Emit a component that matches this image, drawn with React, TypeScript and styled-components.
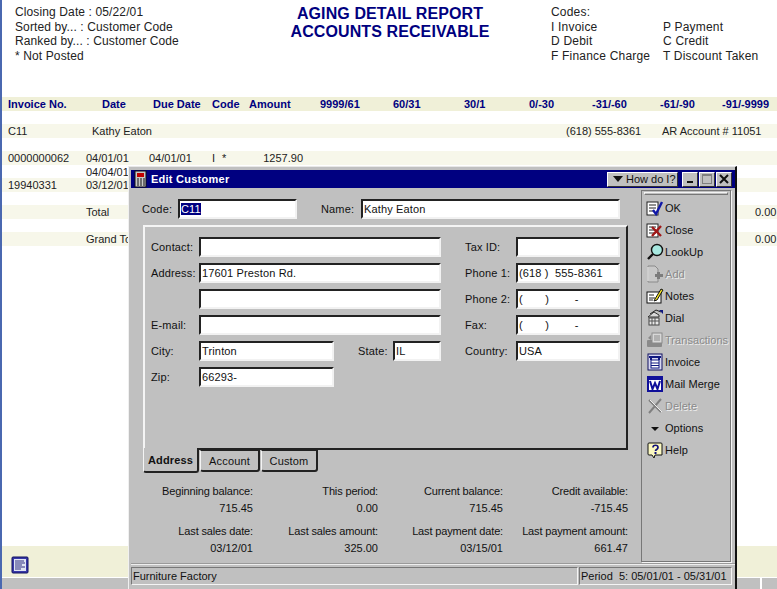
import styled, { createGlobalStyle } from "styled-components";
import { ReactNode } from "react";

const GlobalStyle = createGlobalStyle`
  html, body {
    margin: 0;
    padding: 0;
    background: white;
    overflow: hidden;
  }
  * {
    box-sizing: border-box;
  }
`;

const BAND_DARK = "#f0f0d8";
const BAND_LIGHT = "#f7f7ea";
const NAVY = "#000080";
const GRAY = "#c0c0c0";

const Page = styled.div`
  position: relative;
  width: 777px;
  height: 589px;
  overflow: hidden;
  display: flex;
  flex-direction: column;
  border-left: 2px solid #4a68b0;
  font-family: "Liberation Sans", Arial, sans-serif;
  font-size: 11px;
  color: #222;
`;

const ReportHeader = styled.div`
  height: 97px;
  padding: 5px 0 0 13px;
  display: flex;
`;

const InfoBlock = styled.div`
  width: 220px;
  font-size: 12px;
  line-height: 14.5px;
  letter-spacing: 0.12px;
`;

const Title = styled.div`
  width: 316px;
  padding-right: 6px;
  text-align: center;
  font-size: 16px;
  font-weight: bold;
  line-height: 18px;
  letter-spacing: 0.1px;
  color: ${NAVY};
`;

const Codes = styled.div`
  width: 226px;
  font-size: 12px;
  line-height: 14.5px;
  letter-spacing: 0.2px;
  display: grid;
  grid-template-columns: 112px 1fr;
  align-content: start;
`;

const Band = styled.div<{ $fill?: string }>`
  height: 13.5px;
  line-height: 14px;
  padding-left: 6px;
  display: flex;
  white-space: nowrap;
  background: ${(p) => p.$fill || "transparent"};
`;

const Cell = styled.span<{ $w: number; $right?: boolean }>`
  flex: none;
  width: ${(p) => p.$w}px;
  text-align: ${(p) => (p.$right ? "right" : "left")};
`;

const HeaderBand = styled(Band)`
  font-weight: bold;
  color: ${NAVY};
`;

const Spacer = styled.div`
  flex: 1;
`;

const FooterBand = styled.div`
  height: 31px;
  margin-left: -2px;
  padding: 10px 0 0 11px;
  background: ${BAND_DARK};
`;

const ScrollTrack = styled.div`
  height: 12px;
  margin-left: -2px;
  background: ${GRAY};
  border-top: 1px solid white;
  display: flex;
  justify-content: flex-end;
`;

const ScrollEnd = styled.div`
  width: 17px;
  border-left: 2px solid white;
`;

const Window = styled.div`
  position: absolute;
  left: 126px;
  top: 166px;
  width: 609px;
  height: 426px;
  display: flex;
  flex-direction: column;
  background: ${GRAY};
  border-top: 1px solid #e8e8e8;
  border-left: 1px solid #f0f0f0;
  border-right: 2px solid #111;
  padding: 3px 0 0 2px;
  color: #111;
`;

const TitleBar = styled.div`
  height: 18px;
  flex: none;
  background: ${NAVY};
  color: white;
  display: flex;
  align-items: center;
  padding: 0 3px 0 2px;
`;

const TitleText = styled.div`
  font-size: 11px;
  font-weight: bold;
  letter-spacing: 0.25px;
  margin-left: 2px;
  flex: 1;
`;

const raised = `
  background: ${GRAY};
  border-top: 1px solid #fff;
  border-left: 1px solid #fff;
  border-right: 1px solid #333;
  border-bottom: 1px solid #333;
`;

const HowDoI = styled.div`
  ${raised}
  width: 71px;
  height: 15px;
  margin-right: 3px;
  display: flex;
  align-items: center;
  gap: 3px;
  padding-left: 5px;
  color: #111;
  white-space: nowrap;
`;

const CaptionButton = styled.div`
  ${raised}
  width: 16px;
  height: 15px;
  margin-left: 1px;
  display: flex;
  align-items: center;
  justify-content: center;
`;

const MainArea = styled.div`
  flex: 1;
  display: flex;
  min-height: 0;
`;

const LeftPane = styled.div`
  width: 509px;
  padding: 11px 0 0 11px;
`;

const TopRow = styled.div`
  height: 20px;
  display: flex;
  align-items: center;
`;

const Label = styled.span<{ $w: number; $pad?: number }>`
  flex: none;
  width: ${(p) => p.$w}px;
  padding-left: ${(p) => p.$pad || 0}px;
  letter-spacing: 0.15px;
`;

const Field = styled.div<{ $w: number }>`
  flex: none;
  width: ${(p) => p.$w}px;
  height: 20px;
  background: white;
  border-top: 2px solid #222;
  border-left: 2px solid #222;
  border-right: 2px solid #f2f2f2;
  border-bottom: 2px solid #f2f2f2;
  line-height: 16px;
  padding-left: 1px;
  white-space: pre;
  letter-spacing: 0.15px;
  color: #111;
`;

const Selected = styled.span`
  background: ${NAVY};
  color: white;
`;

const Panel = styled.div`
  margin: 6px 0 0 1px;
  width: 485px;
  height: 225px;
  padding: 10px 0 0 6px;
  border-top: 2px solid #f4f4f4;
  border-left: 2px solid #f4f4f4;
  border-right: 2px solid #222;
  border-bottom: 2px solid #222;
  display: flex;
`;

const FormColumn = styled.div<{ $w: number }>`
  width: ${(p) => p.$w}px;
  display: flex;
  flex-direction: column;
  gap: 6px;
`;

const FormRow = styled.div`
  height: 20px;
  display: flex;
  align-items: center;
`;

const Tabs = styled.div`
  display: flex;
  align-items: flex-start;
  margin: -2px 0 0 1px;
  height: 25px;
`;

const Tab = styled.div<{ $active?: boolean; $w: number }>`
  position: relative;
  width: ${(p) => p.$w}px;
  height: ${(p) => (p.$active ? 25 : 22)}px;
  margin-top: ${(p) => (p.$active ? 0 : 2)}px;
  margin-right: 1px;
  padding-top: 1px;
  background: ${GRAY};
  border-left: 1px solid #f4f4f4;
  border-right: 2px solid #222;
  border-bottom: 2px solid #222;
  border-top: ${(p) => (p.$active ? "none" : "1px solid #222")};
  border-bottom-left-radius: 3px;
  border-bottom-right-radius: 3px;
  display: flex;
  align-items: center;
  justify-content: center;
  font-weight: ${(p) => (p.$active ? "bold" : "normal")};
  letter-spacing: 0.15px;
`;

const Summary = styled.div`
  margin: 10px 0 0 -14px;
  display: grid;
  grid-template-columns: repeat(4, 125px);
  width: 500px;
  row-gap: 7px;
`;

const SummaryItem = styled.div`
  text-align: right;
  line-height: 16.5px;
  letter-spacing: -0.15px;
`;

const SummaryValue = styled.div`
  letter-spacing: 0;
`;

const SideBar = styled.div`
  width: 90px;
  margin: 2px 0 0 1px;
  border: 1px solid #777;
  box-shadow: 1px 1px 0 #f4f4f4;
  padding: 1px 2px 0;
`;

const Grip = styled.div`
  height: 3px;
  margin-bottom: 2px;
  border-top: 1px solid #f4f4f4;
  border-left: 1px solid #f4f4f4;
  border-right: 1px solid #777;
  border-bottom: 1px solid #777;
`;

const ToolItem = styled.div<{ $disabled?: boolean }>`
  height: 22px;
  display: flex;
  align-items: center;
  padding-left: 2px;
  letter-spacing: 0.05px;
  white-space: nowrap;
  color: ${(p) => (p.$disabled ? "#8a8a8a" : "#111")};
  text-shadow: ${(p) => (p.$disabled ? "1px 1px 0 #eee" : "none")};
`;

const ToolGlyph = styled.span`
  flex: none;
  width: 19px;
  height: 18px;
  display: flex;
  align-items: center;
`;

const StatusBar = styled.div`
  flex: none;
  height: 24px;
  margin-top: 1px;
  padding: 2px 1px 0 0;
  border-top: 2px groove #eee;
  display: flex;
  gap: 1px;
`;

const StatusCell = styled.div<{ $w: number }>`
  width: ${(p) => p.$w}px;
  height: 18px;
  border-top: 1px solid #777;
  border-left: 1px solid #777;
  border-right: 1px solid #f4f4f4;
  border-bottom: 1px solid #f4f4f4;
  line-height: 16px;
  padding-left: 1px;
  white-space: pre;
`;

const WindowBottom = styled.div`
  height: 5px;
  flex: none;
`;

const Svg = ({ children, w = 18, h = 18 }: { children: ReactNode; w?: number; h?: number }) => (
  <svg width={w} height={h} viewBox={`0 0 ${w} ${h}`}>
    {children}
  </svg>
);

const CalcIcon = () => (
  <Svg w={16} h={18}>
    <rect x="2" y="1" width="11" height="16" fill="#c8c8c8" stroke="#111" />
    <rect x="4" y="3" width="7" height="4" fill="#c00000" />
    <path
      d="M4 9h2M7 9h2M10 9h2M4 11h2M7 11h2M10 11h2M4 13h2M7 13h2M10 13h2M4 15h2M7 15h2M10 15h2"
      stroke="#111"
      strokeWidth="1.2"
    />
  </Svg>
);

const OkIcon = () => (
  <Svg>
    <rect x="1" y="3" width="11" height="13" fill="white" stroke="#222" />
    <path d="M3 6h7M3 9h7M3 12h5" stroke="#222" />
    <path d="M7 11l3 4 6-12" fill="none" stroke="#1018a8" strokeWidth="2.4" />
  </Svg>
);

const CloseIcon = () => (
  <Svg>
    <rect x="1" y="3" width="11" height="13" fill="white" stroke="#222" />
    <path d="M3 6h7M3 9h7M3 12h7" stroke="#222" />
    <path d="M6 6l9 9M15 5l-9 10" stroke="#a01818" strokeWidth="2.4" />
  </Svg>
);

const LookUpIcon = () => (
  <Svg>
    <circle cx="11" cy="7" r="5.5" fill="#a8e8e0" stroke="#111" strokeWidth="1.4" />
    <path d="M7 11l-5 5" stroke="#111" strokeWidth="2.4" />
  </Svg>
);

const AddIcon = () => (
  <Svg>
    <path d="M2 1h7l3 3v13H2z" fill="#c8c8c8" stroke="#8a8a8a" />
    <path d="M2 2v14" stroke="#f4f4f4" />
    <path d="M9 9h2V7h3v2h3v3h-3v2h-3v-2H9z" fill="#7c7c7c" />
  </Svg>
);

const NotesIcon = () => (
  <Svg>
    <rect x="1" y="5" width="14" height="11" fill="white" stroke="#111" />
    <path d="M3 8h5M3 11h6M3 13h4" stroke="#222" />
    <path d="M9 12l6-10 2 1-6 10-3 1z" fill="#f0e020" stroke="#111" />
  </Svg>
);

const DialIcon = () => (
  <Svg>
    <path d="M2 8l6-5 5 3v2H2z" fill="#d8d8d8" stroke="#333" />
    <path d="M4 5l6-4 5 2" fill="none" stroke="#222" />
    <path d="M13 1l4 0 0 4z" fill="#101880" />
    <rect x="3" y="9" width="10" height="7" fill="#e8e8e8" stroke="#444" />
    <path d="M3 12h10M6 9v7M9 9v7" stroke="#555" />
  </Svg>
);

const TransactionsIcon = () => (
  <Svg>
    <rect x="1" y="9" width="15" height="7" rx="1" fill="#8a8a8a" />
    <rect x="6" y="2" width="10" height="10" fill="#d8d8d8" stroke="#8a8a8a" />
    <path d="M8 5h6M8 7h6M8 9h6" stroke="#8a8a8a" />
    <path d="M2 7l3-3v5z" fill="#8a8a8a" />
  </Svg>
);

const InvoiceIcon = () => (
  <Svg>
    <rect x="2" y="1" width="14" height="16" fill="#d8d8f0" stroke="#101060" />
    <rect x="3" y="3" width="12" height="2" fill="#101880" />
    <rect x="5" y="7" width="8" height="8" fill="white" stroke="#101880" />
    <path d="M5 10h8M5 12.500h8" stroke="#101880" />
    <rect x="4" y="5" width="2" height="2" fill="#101880" />
    <rect x="12" y="5" width="2" height="2" fill="#101880" />
  </Svg>
);

const MailMergeIcon = () => (
  <Svg>
    <rect x="1" y="1" width="16" height="16" fill="#10109a" />
    <rect x="3" y="5" width="12" height="10" fill="white" />
    <path d="M4 6l2.500 8 2.500-6 2.500 6 2.500-8" fill="none" stroke="#10109a" strokeWidth="2" />
  </Svg>
);

const DeleteIcon = () => (
  <Svg>
    <path d="M3 3l12 12M15 2L3 16" stroke="#808080" strokeWidth="2" />
    <path d="M4 3l12 12" stroke="#eee" />
  </Svg>
);

const OptionsIcon = () => (
  <Svg>
    <path d="M5 8h8l-4 4z" fill="#111" />
  </Svg>
);

const HelpIcon = () => (
  <Svg>
    <path d="M3 2h12a1 1 0 0 1 1 1v11H9l-1 3-2-3H3a1 1 0 0 1-1-1V3a1 1 0 0 1 1-1z" fill="#fbf8c0" stroke="#111" />
    <path d="M7 6.500c0-3 5-3 5 0 0 2-2.500 2-2.500 3.500" fill="none" stroke="#10107a" strokeWidth="1.700" />
    <rect x="8.500" y="11" width="2" height="2" fill="#10107a" />
  </Svg>
);

const ReportIcon = () => (
  <Svg>
    <rect x="1" y="1" width="16" height="16" rx="1" fill="#3838a8" stroke="#101060" />
    <rect x="3" y="3" width="12" height="12" fill="#e0e4f4" />
    <path d="M4 5h9M4 7h10M4 9h7M4 11h10M4 13h6" stroke="#303080" />
  </Svg>
);

const tools: { label: string; icon: ReactNode; disabled?: boolean }[] = [
  { label: "OK", icon: <OkIcon /> },
  { label: "Close", icon: <CloseIcon /> },
  { label: "LookUp", icon: <LookUpIcon /> },
  { label: "Add", icon: <AddIcon />, disabled: true },
  { label: "Notes", icon: <NotesIcon /> },
  { label: "Dial", icon: <DialIcon /> },
  { label: "Transactions", icon: <TransactionsIcon />, disabled: true },
  { label: "Invoice", icon: <InvoiceIcon /> },
  { label: "Mail Merge", icon: <MailMergeIcon /> },
  { label: "Delete", icon: <DeleteIcon />, disabled: true },
  { label: "Options", icon: <OptionsIcon /> },
  { label: "Help", icon: <HelpIcon /> },
];

const summary: [string, string][] = [
  ["Beginning balance:", "715.45"],
  ["This period:", "0.00"],
  ["Current balance:", "715.45"],
  ["Credit available:", "-715.45"],
  ["Last sales date:", "03/12/01"],
  ["Last sales amount:", "325.00"],
  ["Last payment date:", "03/15/01"],
  ["Last payment amount:", "661.47"],
];

const agingHeads: [string, number][] = [
  ["Invoice No.", 94],
  ["Date", 51],
  ["Due Date", 59],
  ["Code", 37],
  ["Amount", 71],
  ["9999/61", 73],
  ["60/31", 71],
  ["30/1", 65],
  ["0/-30", 63],
  ["-31/-60", 68],
  ["-61/-90", 62],
  ["-91/-9999", 60],
];

const App = () => {
  return (
    <Page>
      <GlobalStyle />
      <ReportHeader>
        <InfoBlock>
          <div>Closing Date : 05/22/01</div>
          <div>Sorted by... : Customer Code</div>
          <div>Ranked by... : Customer Code</div>
          <div>* Not Posted</div>
        </InfoBlock>
        <Title>
          <div>AGING DETAIL REPORT</div>
          <div>ACCOUNTS RECEIVABLE</div>
        </Title>
        <Codes>
          <div>Codes:</div>
          <div />
          <div>I Invoice</div>
          <div>P Payment</div>
          <div>D Debit</div>
          <div>C Credit</div>
          <div>F Finance Charge</div>
          <div>T Discount Taken</div>
        </Codes>
      </ReportHeader>

      <HeaderBand $fill={BAND_DARK}>
        {agingHeads.map(([head, w]) => (
          <Cell key={head} $w={w}>
            {head}
          </Cell>
        ))}
      </HeaderBand>
      <Band />
      <Band $fill={BAND_LIGHT}>
        <Cell $w={84}>C11</Cell>
        <Cell $w={474}>Kathy Eaton</Cell>
        <Cell $w={96}>(618) 555-8361</Cell>
        <Cell $w={100}>AR Account # 11051</Cell>
      </Band>
      <Band />
      <Band $fill={BAND_LIGHT}>
        <Cell $w={78}>0000000062</Cell>
        <Cell $w={63}>04/01/01</Cell>
        <Cell $w={63}>04/01/01</Cell>
        <Cell $w={10}>I</Cell>
        <Cell $w={10}>*</Cell>
        <Cell $w={71} $right>
          1257.90
        </Cell>
      </Band>
      <Band>
        <Cell $w={78} />
        <Cell $w={63}>04/04/01</Cell>
      </Band>
      <Band $fill={BAND_LIGHT}>
        <Cell $w={78}>19940331</Cell>
        <Cell $w={63}>03/12/01</Cell>
      </Band>
      <Band />
      <Band $fill={BAND_LIGHT}>
        <Cell $w={78} />
        <Cell $w={669}>Total</Cell>
        <Cell $w={20} $right>
          0.00
        </Cell>
      </Band>
      <Band />
      <Band $fill={BAND_LIGHT}>
        <Cell $w={78} />
        <Cell $w={669}>Grand Total</Cell>
        <Cell $w={20} $right>
          0.00
        </Cell>
      </Band>
      <Spacer />
      <FooterBand>
        <ReportIcon />
      </FooterBand>
      <ScrollTrack>
        <ScrollEnd />
      </ScrollTrack>

      <Window>
        <TitleBar>
          <CalcIcon />
          <TitleText>Edit Customer</TitleText>
          <HowDoI>
            <svg width="10" height="6" viewBox="0 0 10 6">
              <path d="M0 0h10L5 6z" fill="#111" />
            </svg>
            How do I?
          </HowDoI>
          <CaptionButton>
            <svg width="10" height="10" viewBox="0 0 10 10">
              <rect x="2" y="7" width="6" height="2" fill="#111" />
            </svg>
          </CaptionButton>
          <CaptionButton>
            <svg width="10" height="10" viewBox="0 0 10 10">
              <rect x="0.500" y="0.500" width="9" height="9" fill="none" stroke="#808080" />
              <path d="M0 1.500h10" stroke="#808080" />
            </svg>
          </CaptionButton>
          <CaptionButton>
            <svg width="10" height="10" viewBox="0 0 10 10">
              <path d="M1 1l8 8M9 1l-8 8" stroke="#111" strokeWidth="2" />
            </svg>
          </CaptionButton>
        </TitleBar>

        <MainArea>
          <LeftPane>
            <TopRow>
              <Label $w={36}>Code:</Label>
              <Field $w={119}>
                <Selected>C11</Selected>
              </Field>
              <Label $w={64} $pad={24}>
                Name:
              </Label>
              <Field $w={259}>Kathy Eaton</Field>
            </TopRow>
            <Panel>
              <FormColumn $w={314}>
                <FormRow>
                  <Label $w={48}>Contact:</Label>
                  <Field $w={242} />
                </FormRow>
                <FormRow>
                  <Label $w={48}>Address:</Label>
                  <Field $w={242}>17601 Preston Rd.</Field>
                </FormRow>
                <FormRow>
                  <Label $w={48} />
                  <Field $w={242} />
                </FormRow>
                <FormRow>
                  <Label $w={48}>E-mail:</Label>
                  <Field $w={242} />
                </FormRow>
                <FormRow>
                  <Label $w={48}>City:</Label>
                  <Field $w={135}>Trinton</Field>
                  <Label $w={59} $pad={24}>
                    State:
                  </Label>
                  <Field $w={48}>IL</Field>
                </FormRow>
                <FormRow>
                  <Label $w={48}>Zip:</Label>
                  <Field $w={135}>66293-</Field>
                </FormRow>
              </FormColumn>
              <FormColumn $w={155}>
                <FormRow>
                  <Label $w={51}>Tax ID:</Label>
                  <Field $w={104} />
                </FormRow>
                <FormRow>
                  <Label $w={51}>Phone 1:</Label>
                  <Field $w={104}>{"(618 )  555-8361"}</Field>
                </FormRow>
                <FormRow>
                  <Label $w={51}>Phone 2:</Label>
                  <Field $w={104}>{"(       )        -"}</Field>
                </FormRow>
                <FormRow>
                  <Label $w={51}>Fax:</Label>
                  <Field $w={104}>{"(       )        -"}</Field>
                </FormRow>
                <FormRow>
                  <Label $w={51}>Country:</Label>
                  <Field $w={104}>USA</Field>
                </FormRow>
              </FormColumn>
            </Panel>
            <Tabs>
              <Tab $active $w={56}>
                Address
              </Tab>
              <Tab $w={60}>Account</Tab>
              <Tab $w={57}>Custom</Tab>
            </Tabs>
            <Summary>
              {summary.map(([label, value]) => (
                <SummaryItem key={label}>
                  <div>{label}</div>
                  <SummaryValue>{value}</SummaryValue>
                </SummaryItem>
              ))}
            </Summary>
          </LeftPane>
          <SideBar>
            <Grip />
            {tools.map((t) => (
              <ToolItem key={t.label} $disabled={t.disabled}>
                <ToolGlyph>{t.icon}</ToolGlyph>
                {t.label}
              </ToolItem>
            ))}
          </SideBar>
        </MainArea>

        <StatusBar>
          <StatusCell $w={447}>Furniture Factory</StatusCell>
          <StatusCell $w={153}>Period  5: 05/01/01 - 05/31/01</StatusCell>
        </StatusBar>
        <WindowBottom />
      </Window>
    </Page>
  );
};

export default App;
